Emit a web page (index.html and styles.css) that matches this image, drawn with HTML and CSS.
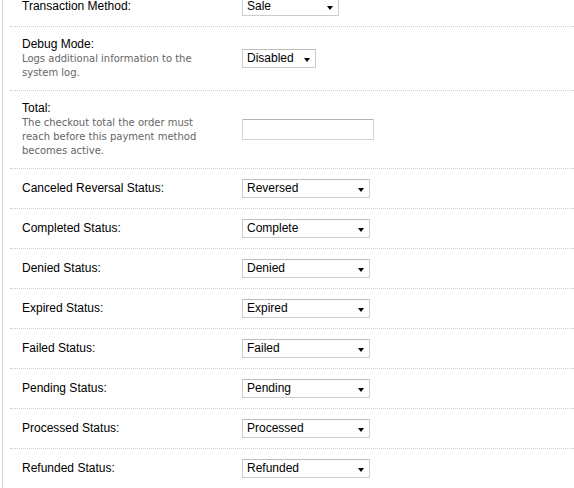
FILE: index.html
```html
<!DOCTYPE html>
<html>
<head>
<meta charset="utf-8">
<link rel="stylesheet" href="styles.css">
</head>
<body>
<div class="page">
  <div class="form">
    <div class="row">
      <div class="label">Transaction Method:</div>
      <div class="field"><span class="select w-sale">Sale</span></div>
    </div>
    <div class="row">
      <div class="label">Debug Mode:<span class="help">Logs additional information to the system log.</span></div>
      <div class="field"><span class="select w-debug">Disabled</span></div>
    </div>
    <div class="row">
      <div class="label">Total:<span class="help">The checkout total the order must reach before this payment method becomes active.</span></div>
      <div class="field"><span class="input"></span></div>
    </div>
    <div class="row">
      <div class="label">Canceled Reversal Status:</div>
      <div class="field"><span class="select w-status">Reversed</span></div>
    </div>
    <div class="row">
      <div class="label">Completed Status:</div>
      <div class="field"><span class="select w-status">Complete</span></div>
    </div>
    <div class="row">
      <div class="label">Denied Status:</div>
      <div class="field"><span class="select w-status">Denied</span></div>
    </div>
    <div class="row">
      <div class="label">Expired Status:</div>
      <div class="field"><span class="select w-status">Expired</span></div>
    </div>
    <div class="row">
      <div class="label">Failed Status:</div>
      <div class="field"><span class="select w-status">Failed</span></div>
    </div>
    <div class="row">
      <div class="label">Pending Status:</div>
      <div class="field"><span class="select w-status">Pending</span></div>
    </div>
    <div class="row">
      <div class="label">Processed Status:</div>
      <div class="field"><span class="select w-status">Processed</span></div>
    </div>
    <div class="row">
      <div class="label">Refunded Status:</div>
      <div class="field"><span class="select w-status">Refunded</span></div>
    </div>
  </div>
</div>
</body>
</html>
```
FILE: styles.css
```css
html, body {
  margin: 0;
  padding: 0;
  overflow: hidden;
  background: #fff;
}
body {
  font-family: "Liberation Sans", Arial, sans-serif;
  font-size: 12px;
  color: #000;
}
.page {
  margin-left: 2px;
  border-left: 1px solid #cfcfcf;
  padding-left: 7px;
  height: 100vh;
  overflow: hidden;
}
.form {
  margin-top: -13px;
}
.row {
  display: grid;
  grid-template-columns: 220px 1fr;
  align-items: center;
  padding: 10px 0 10px 12px;
  border-bottom: 1px dotted #cdcdcd;
}
.label {
  line-height: 15px;
}
.help {
  display: block;
  font-family: "DejaVu Sans", Verdana, sans-serif;
  font-size: 10px;
  line-height: 14px;
  color: #666;
  width: 185px;
}
.field {
  display: flex;
  align-items: center;
}
.select {
  position: relative;
  display: block;
  box-sizing: border-box;
  height: 19px;
  line-height: 17px;
  padding: 0 4px;
  border: 1px solid #cdcdcd;
  border-top-color: #bdbdbd;
  background: #fff;
  font-size: 12px;
  color: #000;
}
.select::after {
  content: "";
  position: absolute;
  right: 5px;
  top: 8px;
  border-left: 3.5px solid transparent;
  border-right: 3.5px solid transparent;
  border-top: 4px solid #000;
}
.w-sale { width: 97px; }
.w-debug { width: 74px; }
.w-status { width: 128px; }
.input {
  display: block;
  box-sizing: border-box;
  width: 132px;
  height: 21px;
  border: 1px solid #d4d4d4;
  border-top-color: #b4b4b4;
  background: #fff;
}
```
